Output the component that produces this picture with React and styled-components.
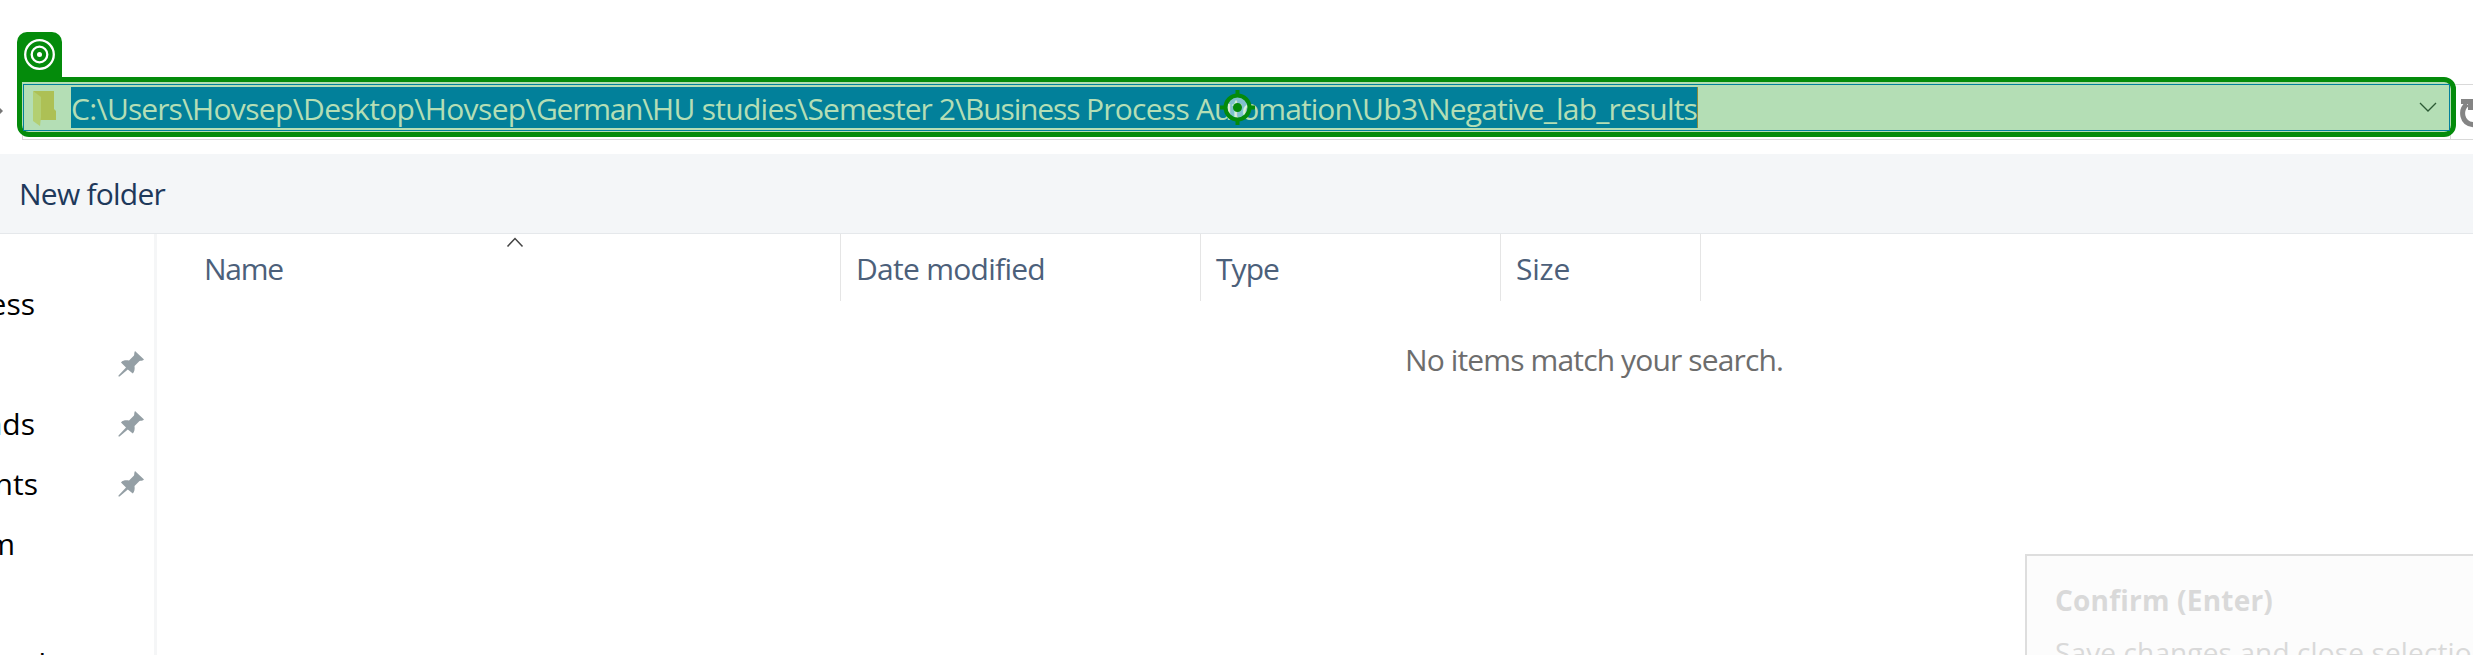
import React, { useLayoutEffect, useRef } from "react";
import styled, { createGlobalStyle } from "styled-components";

const Global = createGlobalStyle`
  * { box-sizing: border-box; }
  body { margin: 0; background: #fff; overflow: hidden; }
`;

const Window = styled.div`
  width: 2473px;
  height: 655px;
  overflow: hidden;
  display: flex;
  flex-direction: column;
  position: relative;
  background: #fff;
  font-family: "Open Sans", "Noto Sans", sans-serif;
  font-size: 30px;
  line-height: 40px;
`;

const AddressRow = styled.header`
  height: 154px;
  flex: none;
  display: flex;
  padding-top: 84px;
`;

const NavEdge = styled.div`
  width: 22px;
  height: 54px;
  flex: none;
  display: flex;
  align-items: center;
  svg { display: block; }
`;

const AddressBox = styled.div`
  width: 2429px;
  height: 56px;
  flex: none;
  border: 1px solid #d9d9d9;
`;

const RefreshBox = styled.div`
  flex: 1;
  height: 56px;
  border: solid #d9d9d9;
  border-width: 1px 0;
  overflow: hidden;
  padding: 14px 0 0 9px;
  svg { display: block; }
`;

const Highlight = styled.div`
  position: absolute;
  left: 17px;
  top: 77px;
  width: 2439px;
  height: 60px;
  border: 5px solid #048b0b;
  border-radius: 0 12px 12px 12px;
  background: #b4deb5;
  padding: 2px 1px 1px;
`;

const Badge = styled.div`
  position: absolute;
  left: 17px;
  top: 32px;
  width: 45px;
  height: 50px;
  border-radius: 10px 10px 0 0;
  background: #048b0b;
  padding: 7px;
  svg { display: block; }
`;

const Field = styled.div`
  height: 47px;
  border: 1px solid #02809b;
  display: flex;
  align-items: center;
  padding: 0 12px 0 9px;
`;

const Path = styled.div`
  height: 41px;
  width: 1627px;
  flex: none;
  display: flex;
  padding-top: 2px;
  margin-left: 13px;
  background: #02809a;
  border-right: 1px solid #8b8b3c;
  color: #b4deb5;
`;

const Spacer = styled.div`flex: 1;`;

const Marker = styled.svg`
  position: absolute;
  left: 1217px;
  top: 87px;
`;

const Toolbar = styled.div`
  height: 80px;
  flex: none;
  background: #f4f6f8;
  border-bottom: 1px solid #e5e8eb;
  padding: 20px 0 0 19px;
  color: #1e395b;
`;

const Body = styled.main`
  flex: 1;
  display: flex;
  min-height: 0;
`;

const Sidebar = styled.nav`
  width: 157px;
  flex: none;
  border-right: 3px solid #f5f6f7;
  padding-top: 40px;
  overflow: hidden;
`;

const SideRow = styled.div`
  height: 60px;
  display: flex;
  align-items: center;
  justify-content: space-between;
  padding-right: 10px;
  color: #000;
  svg { margin-bottom: 1px; }
`;

const SideLabel = styled.span`
  width: ${(p) => p.$w}px;
  display: flex;
  justify-content: flex-end;
  white-space: nowrap;
`;

const Content = styled.section`
  flex: 1;
  min-width: 0;
`;

const Header = styled.div`
  display: flex;
  height: 67px;
  position: relative;
`;

const Column = styled.div`
  width: ${(p) => p.$w}px;
  padding: 15px 0 0 ${(p) => p.$pad}px;
  border-right: 1px solid #e5e5e5;
  color: #4c607a;
`;

const SortMark = styled.svg`
  position: absolute;
  left: 349px;
  top: 3px;
`;

const Empty = styled.p`
  margin: 39px 0 0 1248px;
  color: #6d6d6d;
`;

const Tip = styled.aside`
  position: absolute;
  left: 2025px;
  top: 554px;
  width: 460px;
  height: 120px;
  border: 2px solid #dedede;
  background: #fcfcfc;
  padding: 24px 0 0 28px;
  color: #d9d9d9;
  white-space: nowrap;
`;

const TipTitle = styled.div`
  font-size: 28px;
  font-weight: 700;
  height: 52px;
`;

const TipText = styled.div`
  font-size: 28px;
`;

const Run = styled.span`
  display: inline-block;
  white-space: pre;
  vertical-align: top;
`;

// Tracks its text so that the advance width equals w.
function Text({ w, children }) {
  const ref = useRef(null);
  useLayoutEffect(() => {
    const el = ref.current;
    el.style.letterSpacing = "0px";
    const natural = el.getBoundingClientRect().width;
    el.style.letterSpacing = `${(w - natural) / children.length}px`;
  }, [w, children]);
  return <Run ref={ref}>{children}</Run>;
}

const Pin = () => (
  <svg width="26" height="26" viewBox="0 0 26 26">
    <path fill="#949fa5" d="M17 0 26 8.5C25 10 22.500 9.500 21.500 10L16.500 15C17 18 16.500 21 14.800 22.500L9.800 18.500 1.500 25.500H.5V24.500L8 16.500 3 11.500C5 9 8 9.300 11 9.500L16 4.500C16.500 3 16 1.500 17 0Z" />
  </svg>
);

const rows = [
  { text: "ess", w: 35 },
  { text: "", w: 0, pin: true },
  { text: "nds", w: 35, pin: true },
  { text: "nts", w: 38, pin: true },
  { text: "m", w: 15 },
  { text: "", w: 0 },
  { text: "l", w: 46 },
];

const path = [
  ["C:\\", 36],
  ["Users\\", 85],
  ["Hovsep\\", 111],
  ["Desktop\\", 121.7],
  ["Hovsep\\", 111.3],
  ["German\\", 116],
  ["HU studies\\", 155.5],
  ["Semester 2\\", 157.5],
  ["Business ", 121],
  ["Process ", 110],
  ["Automation\\", 166],
  ["Ub3\\", 66],
  ["Negative_lab_results", 269],
];

export default function App() {
  return (
    <>
      <Global />
      <Window>
        <AddressRow>
          <NavEdge>
            <svg width="3" height="6" viewBox="0 0 3 6"><path d="M0 0 3 3 0 6Z" fill="#777" /></svg>
          </NavEdge>
          <AddressBox />
          <RefreshBox>
            <svg width="28" height="30" viewBox="0 0 28 30">
              <path d="M7 5C0 11 1 25 14 25.700" fill="none" stroke="#848484" strokeWidth="5" />
              <path d="M1 0H14V11H8V5H1Z" fill="#848484" />
            </svg>
          </RefreshBox>
        </AddressRow>
        <Toolbar><Text w={146}>New folder</Text></Toolbar>
        <Body>
          <Sidebar>
            {rows.map((r, i) => (
              <SideRow key={i}>
                <SideLabel $w={r.w}>{r.text}</SideLabel>
                {r.pin && <Pin />}
              </SideRow>
            ))}
          </Sidebar>
          <Content>
            <Header>
              <Column $w={684} $pad={47}><Text w={79}>Name</Text></Column>
              <Column $w={360} $pad={15}><Text w={189}>Date modified</Text></Column>
              <Column $w={300} $pad={15}><Text w={63}>Type</Text></Column>
              <Column $w={200} $pad={15}><Text w={54}>Size</Text></Column>
              <SortMark width="18" height="12" viewBox="0 0 18 12">
                <path d="M1.500 9.500 9 1.500 16.500 9.500" fill="none" stroke="#444" strokeWidth="1.500" />
              </SortMark>
            </Header>
            <Empty><Text w={378}>No items match your search.</Text></Empty>
          </Content>
        </Body>
        <Badge>
          <svg width="31" height="31" viewBox="0 0 31 31" fill="none" stroke="#fff" strokeWidth="2.300">
            <circle cx="15.500" cy="15.500" r="14.300" />
            <circle cx="15.500" cy="15.500" r="7.800" />
            <circle cx="15.500" cy="15.500" r="2.500" fill="#fff" stroke="none" />
          </svg>
        </Badge>
        <Highlight>
          <Field>
            <svg width="25" height="36" viewBox="0 0 25 36">
              <path d="M0 1H21V19L23 21V30H7V12Z" fill="#adc055" />
              <path d="M0 1 8 7V27L7 36 0 31Z" fill="#b3cf72" />
            </svg>
            <Path>
              {path.map(([text, w], i) => <Text key={i} w={w}>{text}</Text>)}
            </Path>
            <Spacer />
            <svg width="18" height="11" viewBox="0 0 18 11"><path d="M1 1 9 9 17 1" fill="none" stroke="#2c5a35" strokeWidth="1.300" /></svg>
          </Field>
        </Highlight>
        <Marker width="41" height="41" viewBox="0 0 41 41">
          <circle cx="20.500" cy="20.500" r="12" fill="#fff" fillOpacity=".5" stroke="#048b0b" strokeWidth="4" />
          <path d="M20.500 3V8M20.500 33V38M3 20.500H8M33 20.500H38" stroke="#048b0b" strokeWidth="4" />
          <circle cx="20.500" cy="20.500" r="4.500" fill="#048b0b" />
        </Marker>
        <Tip>
          <TipTitle><Text w={218}>Confirm (Enter)</Text></TipTitle>
          <TipText><Text w={434}>Save changes and close selection</Text></TipText>
        </Tip>
      </Window>
    </>
  );
}
